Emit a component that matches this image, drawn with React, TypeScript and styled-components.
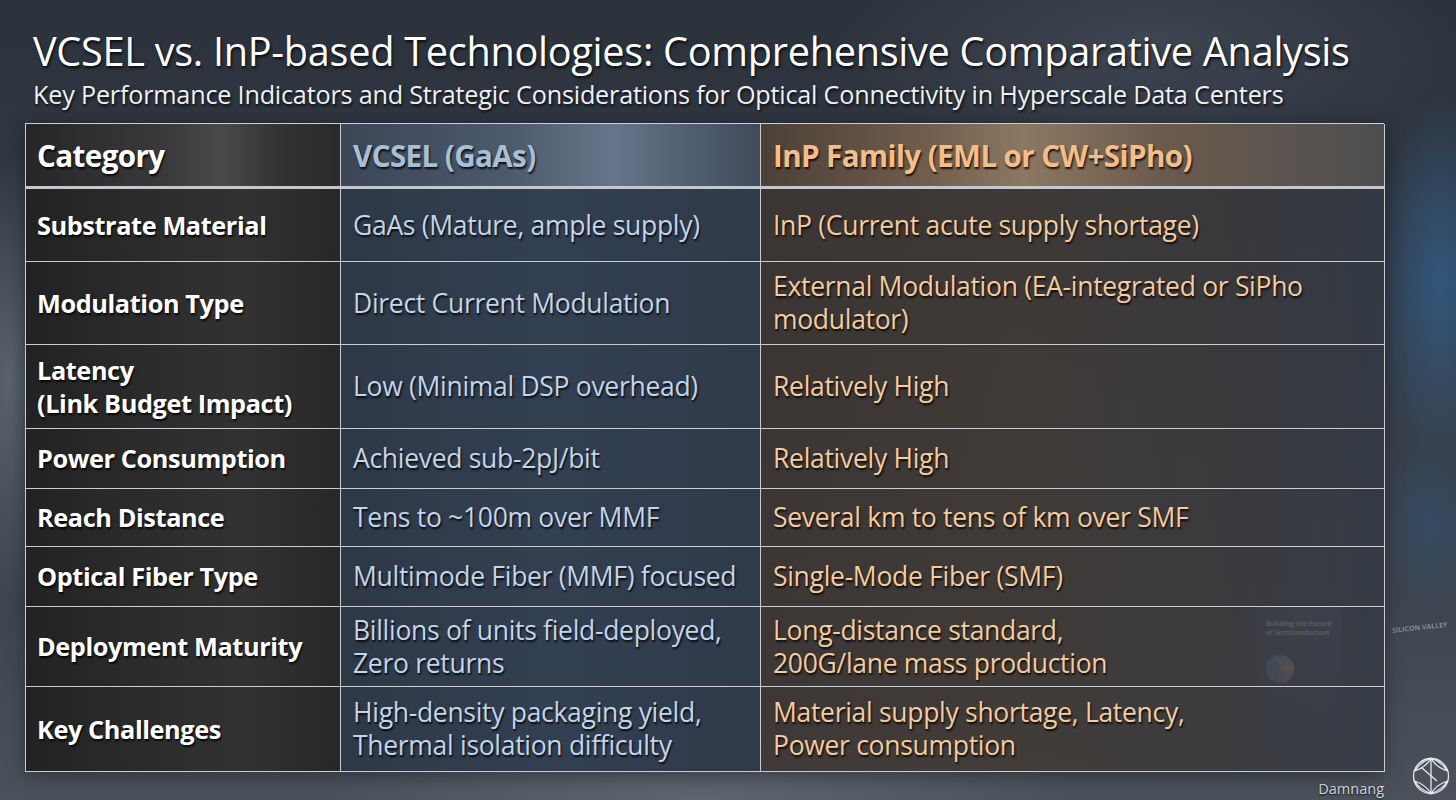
import React from "react";
import styled, { createGlobalStyle } from "styled-components";

const Global = createGlobalStyle`
  html, body { margin: 0; padding: 0; background: #2a313b; }
  #root { width: 1456px; height: 800px; overflow: hidden; }
  * { box-sizing: border-box; }
`;

const Slide = styled.div`
  position: relative;
  width: 1456px;
  height: 800px;
  overflow: hidden;
  font-family: "Open Sans", "Noto Sans", sans-serif;
  background:
    radial-gradient(ellipse 90px 260px at 1440px 280px, rgba(50, 110, 170, 0.55), transparent 70%),
    radial-gradient(ellipse 60px 120px at 1430px 520px, rgba(40, 90, 140, 0.35), transparent 70%),
    radial-gradient(ellipse 70px 300px at 10px 380px, rgba(120, 130, 142, 0.55), transparent 75%),
    radial-gradient(ellipse 500px 120px at 700px 800px, rgba(110, 118, 128, 0.55), transparent 75%),
    radial-gradient(ellipse 420px 160px at 1150px 40px, rgba(80, 88, 100, 0.5), transparent 75%),
    linear-gradient(180deg, #2b323c 0%, #343c47 40%, #3d4550 75%, #4b525b 100%);
`;

const Header = styled.header`
  padding: 26px 0 0 33px;
  height: 123px;
  color: #ffffff;
  text-shadow: 1px 2px 3px rgba(0, 0, 0, 0.85);
`;

const Title = styled.h1`
  margin: 0;
  font-weight: 400;
  font-size: 39.7px;
  line-height: 50px;
  letter-spacing: -0.3px;
  white-space: nowrap;
`;

const Subtitle = styled.h2`
  margin: 0;
  font-weight: 400;
  font-size: 25.2px;
  line-height: 36px;
  letter-spacing: -0.2px;
  color: #eef1f4;
  white-space: nowrap;
`;

const Table = styled.div`
  position: relative;
  z-index: 1;
  margin-left: 25px;
  width: 1359px;
  display: grid;
  grid-template-columns: 315px 420px 624px;
  grid-template-rows: 65px 73px 83px 84px 60px 58px 60px 80px 85px;
  border-top: 1.5px solid #c9ccd1;
  border-left: 1.5px solid #c9ccd1;
  box-shadow: 0 4px 18px rgba(0, 0, 0, 0.35);
`;

type Col = 0 | 1 | 2;

const headBg = [
  "linear-gradient(90deg, #262626 0%, #3a3a3a 45%, #4a4a4a 62%, #333 80%, #2a2a2a 100%)",
  "linear-gradient(90deg, #3b4656 0%, #4d5a6c 40%, #66758a 65%, #4f5c6e 85%, #404b5a 100%)",
  "linear-gradient(90deg, #4b4038 0%, #6e5b4a 25%, #8c7762 42%, #6a5a4c 65%, #5a544f 85%, #4e4e50 100%)",
];

const bodyBg = [
  "linear-gradient(90deg, #222222 0%, #2c2c2c 40%, #323232 70%, #272727 100%)",
  "linear-gradient(90deg, #2e3847 0%, #334052 50%, #2f3a4a 100%)",
  "linear-gradient(90deg, rgba(60,53,48,0.86) 0%, rgba(64,57,51,0.86) 40%, rgba(58,56,58,0.84) 75%, rgba(50,57,68,0.8) 100%)",
];

const textColor = ["#ffffff", "#c3d5ea", "#f3cc9f"];
const headColor = ["#ffffff", "#a8bfd8", "#f4be88"];

const Cell = styled.div<{ $col: Col; $head?: boolean }>`
  display: flex;
  align-items: center;
  padding: 0 8px 0 ${(p) => (p.$col === 0 ? 11 : 12)}px;
  border-right: 1.5px solid #c9ccd1;
  border-bottom: ${(p) => (p.$head ? "3px solid #c4c8ce" : "1.5px solid #c9ccd1")};
  background: ${(p) => (p.$head ? headBg[p.$col] : bodyBg[p.$col])};
  color: ${(p) => (p.$head ? headColor[p.$col] : textColor[p.$col])};
  font-weight: ${(p) => (p.$head || p.$col === 0 ? 700 : 400)};
  font-size: ${(p) => (p.$head ? 29.6 : p.$col === 0 ? 25.3 : 26.5)}px;
  letter-spacing: ${(p) => (p.$head ? -0.6 : p.$col === 0 ? -0.4 : -0.3)}px;
  line-height: 33px;
  text-shadow: 1px 2px 2px rgba(0, 0, 0, 0.85);
  white-space: pre;
`;

const Poster = styled.div`
  position: absolute;
  z-index: 0;
  left: 1257px;
  top: 606px;
  width: 84px;
  height: 142px;
  background: linear-gradient(180deg, #56637a, #3f4a5c);
  border-radius: 2px;
  color: #eef2f8;
  font-size: 7px;
  font-weight: 700;
  line-height: 9px;
  letter-spacing: -0.1px;
  padding: 13px 0 0 9px;
  white-space: nowrap;
  font-family: "Open Sans", sans-serif;
  display: flex;
  flex-direction: column;
  gap: 18px;
`;

const PosterOrb = styled.div`
  width: 28px;
  height: 28px;
  border-radius: 50%;
  background: conic-gradient(from 200deg, #9a7cd0, #5ab0d8, #e0c888, #9a7cd0);
`;

const Sign = styled.div`
  position: absolute;
  left: 1392px;
  top: 623px;
  font-family: "Open Sans", sans-serif;
  font-size: 7px;
  font-weight: 700;
  color: rgba(215, 222, 235, 0.45);
  white-space: nowrap;
  transform: rotate(-6deg);
`;

const Credit = styled.div`
  position: absolute;
  right: 72px;
  bottom: 2px;
  font-family: "Open Sans", sans-serif;
  font-size: 14.5px;
  color: #d7dbe0;
  text-shadow: 0 1px 2px rgba(0, 0, 0, 0.8);
`;

const Logo = styled.svg`
  position: absolute;
  right: 5px;
  bottom: 4px;
  width: 40px;
  height: 40px;
`;

const rows: [string, string, string][] = [
  ["Substrate Material", "GaAs (Mature, ample supply)", "InP (Current acute supply shortage)"],
  ["Modulation Type", "Direct Current Modulation", "External Modulation (EA-integrated or SiPho\nmodulator)"],
  ["Latency\n(Link Budget Impact)", "Low (Minimal DSP overhead)", "Relatively High"],
  ["Power Consumption", "Achieved sub-2pJ/bit", "Relatively High"],
  ["Reach Distance", "Tens to ~100m over MMF", "Several km to tens of km over SMF"],
  ["Optical Fiber Type", "Multimode Fiber (MMF) focused", "Single-Mode Fiber (SMF)"],
  ["Deployment Maturity", "Billions of units field-deployed,\nZero returns", "Long-distance standard,\n200G/lane mass production"],
  ["Key Challenges", "High-density packaging yield,\nThermal isolation difficulty", "Material supply shortage, Latency,\nPower consumption"],
];

const head: [string, string, string] = ["Category", "VCSEL (GaAs)", "InP Family (EML or CW+SiPho)"];

export default function App() {
  return (
    <>
      <Global />
      <Slide>
        <Header>
          <Title>VCSEL vs. InP-based Technologies: Comprehensive Comparative Analysis</Title>
          <Subtitle>
            Key Performance Indicators and Strategic Considerations for Optical Connectivity in Hyperscale Data Centers
          </Subtitle>
        </Header>
        <Poster>
          <span>
            Building the Future
            <br />
            of Semiconductors
          </span>
          <PosterOrb />
        </Poster>
        <Table>
          {head.map((h, i) => (
            <Cell key={"h" + i} $col={i as Col} $head>
              {h}
            </Cell>
          ))}
          {rows.map((r, ri) =>
            r.map((c, ci) => (
              <Cell key={ri + "-" + ci} $col={ci as Col}>
                {c}
              </Cell>
            ))
          )}
        </Table>
        <Sign>SILICON VALLEY</Sign>
        <Credit>Damnang</Credit>
        <Logo viewBox="0 0 40 40" fill="none" stroke="#e6e9ee" strokeWidth="1.3">
          <circle cx="20" cy="20" r="17.5" />
          <path d="M20 2.5 L20 37.5" />
          <path d="M3.5 15 Q9 6 20 2.5 Q15 11 3.5 15 Z" />
          <path d="M36.5 15 Q31 6 20 2.5 Q25 11 36.5 15 Z" />
          <path d="M3.5 25 Q9 34 20 37.5 Q15 29 3.5 25 Z" />
          <path d="M36.5 25 Q31 34 20 37.5 Q25 29 36.5 25 Z" />
          <path d="M11 12 L26 25" />
        </Logo>
      </Slide>
    </>
  );
}
